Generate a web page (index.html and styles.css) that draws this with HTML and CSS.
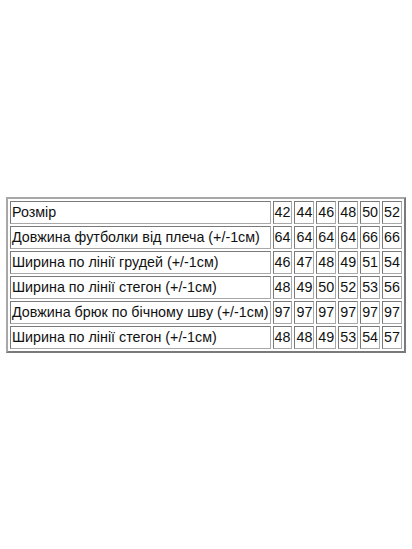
FILE: index.html
```html
<!DOCTYPE html>
<html lang="uk">
<head>
<meta charset="utf-8">
<link rel="stylesheet" href="styles.css">
</head>
<body>
<div class="page">
<table class="sizes">
<tr><td class="label">Розмір</td><td>42</td><td>44</td><td>46</td><td>48</td><td>50</td><td>52</td></tr>
<tr><td class="label">Довжина футболки від плеча (+/-1см)</td><td>64</td><td>64</td><td>64</td><td>64</td><td>66</td><td>66</td></tr>
<tr><td class="label">Ширина по лінії грудей (+/-1см)</td><td>46</td><td>47</td><td>48</td><td>49</td><td>51</td><td>54</td></tr>
<tr><td class="label">Ширина по лінії стегон (+/-1см)</td><td>48</td><td>49</td><td>50</td><td>52</td><td>53</td><td>56</td></tr>
<tr><td class="label">Довжина брюк по бічному шву (+/-1см)</td><td>97</td><td>97</td><td>97</td><td>97</td><td>97</td><td>97</td></tr>
<tr><td class="label">Ширина по лінії стегон (+/-1см)</td><td>48</td><td>48</td><td>49</td><td>53</td><td>54</td><td>57</td></tr>
</table>
</div>
</body>
</html>
```

FILE: styles.css
```css
html, body {
  margin: 0;
  padding: 0;
  background: #fff;
}
.page {
  height: 549px;
  display: flex;
  align-items: center;
  justify-content: center;
}
.sizes {
  border-collapse: separate;
  border-spacing: 2px;
  border: 2px solid;
  border-color: #a8a8a8 #7a7a7a #7a7a7a #a8a8a8;
  font-family: "Liberation Sans", Arial, sans-serif;
  font-size: 14.3px;
  color: #111;
}
.sizes td {
  border: 1px solid;
  border-color: #7a7a7a #a8a8a8 #a8a8a8 #7a7a7a;
  padding: 2px 1px;
  line-height: 17px;
  white-space: nowrap;
}
```
